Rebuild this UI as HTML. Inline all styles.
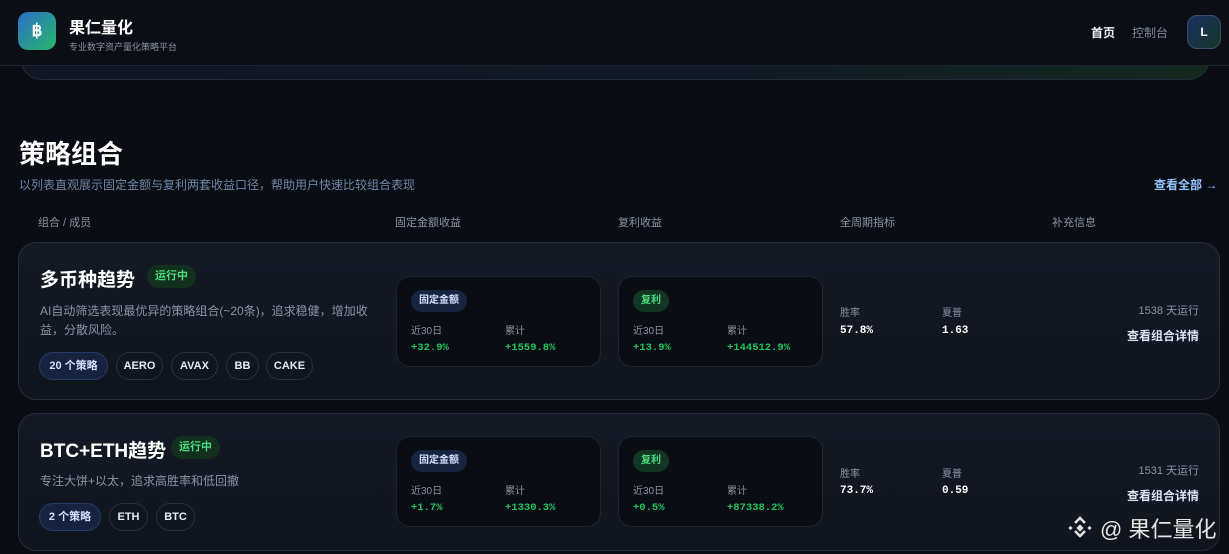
<!DOCTYPE html>
<html><head><meta charset="utf-8"><style>
*{margin:0;padding:0;box-sizing:border-box}
body{width:1229px;height:554px;overflow:hidden;background:#0a0d14;font-family:"Liberation Sans","Noto Sans CJK SC",sans-serif;color:#e8edf5;position:relative}
.a{position:absolute;white-space:nowrap}
.hdr{position:absolute;left:0;top:0;width:1229px;height:66px;background:#0b0e15;border-bottom:1px solid #1e2430}
.logo{left:18px;top:12px;width:38px;height:38px;border-radius:10px;background:linear-gradient(135deg,#2a6fc9,#28b86a);color:#fff;font-weight:bold;font-size:17px;text-align:center;line-height:38px}
.top{left:20px;top:50px;width:1190px;height:30px;border:1px solid #232b3a;border-top:none;border-radius:0 0 22px 22px;background:linear-gradient(90deg,#111622,#111a24 60%,#12291f)}
.card{position:absolute;left:18px;width:1202px;background:linear-gradient(180deg,#141a25,#10141d);border:1px solid #262c38;border-radius:18px}
.badge{position:absolute;height:23px;line-height:23px;padding:0 8px;border-radius:12px;background:#13301f;color:#4ade80;font-size:11px;font-weight:bold}
.chip{position:absolute;height:28px;line-height:26px;border:1px solid #2a303c;border-radius:14px;font-size:11px;font-weight:bold;color:#e6ebf3;text-align:center}
.chip.b{background:#16233f;border-color:#243b66;color:#cfe0ff}
.box{position:absolute;width:205px;height:91px;background:#0a0d13;border:1px solid #1f2530;border-radius:14px}
.pill{position:absolute;left:14px;top:13px;height:22px;line-height:22px;padding:0 8px;border-radius:11px;font-size:10px;font-weight:bold}
.lb{position:absolute;font-size:10px;color:#8b93a3}
.v{position:absolute;font-family:"Liberation Mono",monospace;font-weight:bold;font-size:10.5px;color:#22c55e}
.mv{font-family:"Liberation Mono",monospace;font-weight:bold;font-size:11px;color:#fff}
.desc{font-size:12px;color:#8b93a3;line-height:19px}
.ttl{font-size:19px;font-weight:bold;color:#fff}
.colh{font-size:11px;color:#8a93a3;top:214px}
</style></head><body>
<div class="a top"></div>
<div class="hdr"></div>
<div class="a logo">฿</div>
<div class="a" style="left:69px;top:14px;font-size:16px;font-weight:bold;color:#fff">果仁量化</div>
<div class="a" style="left:69px;top:40px;font-size:9px;color:#8b93a3">专业数字资产量化策略平台</div>
<div class="a" style="left:1091px;top:24px;font-size:12px;font-weight:bold;color:#eef2f7">首页</div>
<div class="a" style="left:1132px;top:24px;font-size:12px;color:#7e8696">控制台</div>
<div class="a" style="left:1187px;top:15px;width:34px;height:34px;border-radius:10px;border:1px solid #3a4a68;background:linear-gradient(135deg,#1a3060,#173626);text-align:center;line-height:32px;font-size:12px;font-weight:bold;color:#fff">L</div>

<div class="a" style="left:19px;top:134px;font-size:26px;font-weight:bold;color:#fff">策略组合</div>
<div class="a" style="left:19px;top:176px;font-size:12px;color:#6f86a8">以列表直观展示固定金额与复利两套收益口径，帮助用户快速比较组合表现</div>
<div class="a" style="left:1154px;top:176px;font-size:12px;font-weight:bold;color:#93c5fd">查看全部 →</div>
<div class="a colh" style="left:38px">组合 / 成员</div>
<div class="a colh" style="left:395px">固定金额收益</div>
<div class="a colh" style="left:618px">复利收益</div>
<div class="a colh" style="left:840px">全周期指标</div>
<div class="a colh" style="left:1052px">补充信息</div>

<!-- card 1 -->
<div class="card" style="top:242px;height:158px"></div>
<div class="a ttl" style="left:40px;top:265px">多币种趋势</div>
<div class="badge" style="left:147px;top:265px">运行中</div>
<div class="a desc" style="left:40px;top:302px;white-space:normal;width:335px">AI自动筛选表现最优异的策略组合(~20条)，追求稳健，增加收益，分散风险。</div>
<div class="chip b" style="left:39px;top:352px;width:69px">20 个策略</div>
<div class="chip" style="left:116px;top:352px;width:47px">AERO</div>
<div class="chip" style="left:171px;top:352px;width:47px">AVAX</div>
<div class="chip" style="left:226px;top:352px;width:33px">BB</div>
<div class="chip" style="left:266px;top:352px;width:47px">CAKE</div>
<div class="box" style="left:396px;top:276px">
 <div class="pill" style="background:#17243d;color:#cfe0ff">固定金额</div>
 <div class="lb" style="left:14px;top:45px">近30日</div><div class="lb" style="left:108px;top:45px">累计</div>
 <div class="v" style="left:14px;top:65px">+32.9%</div><div class="v" style="left:108px;top:65px">+1559.8%</div>
</div>
<div class="box" style="left:618px;top:276px">
 <div class="pill" style="background:#133524;color:#4ade80">复利</div>
 <div class="lb" style="left:14px;top:45px">近30日</div><div class="lb" style="left:108px;top:45px">累计</div>
 <div class="v" style="left:14px;top:65px">+13.9%</div><div class="v" style="left:108px;top:65px">+144512.9%</div>
</div>
<div class="a lb" style="left:840px;top:304px">胜率</div><div class="a lb" style="left:942px;top:304px">夏普</div>
<div class="a mv" style="left:840px;top:325px">57.8%</div><div class="a mv" style="left:942px;top:325px">1.63</div>
<div class="a" style="right:30px;top:302px;font-size:11px;color:#8b93a3">1538 天运行</div>
<div class="a" style="right:30px;top:327px;font-size:12px;font-weight:bold;color:#dbe6f5">查看组合详情</div>

<!-- card 2 -->
<div class="card" style="top:413px;height:138px"></div>
<div class="a ttl" style="left:40px;top:436px">BTC+ETH趋势</div>
<div class="badge" style="left:171px;top:436px">运行中</div>
<div class="a desc" style="left:40px;top:472px">专注大饼+以太，追求高胜率和低回撤</div>
<div class="chip b" style="left:39px;top:503px;width:62px">2 个策略</div>
<div class="chip" style="left:109px;top:503px;width:39px">ETH</div>
<div class="chip" style="left:156px;top:503px;width:39px">BTC</div>
<div class="box" style="left:396px;top:436px">
 <div class="pill" style="background:#17243d;color:#cfe0ff">固定金额</div>
 <div class="lb" style="left:14px;top:45px">近30日</div><div class="lb" style="left:108px;top:45px">累计</div>
 <div class="v" style="left:14px;top:65px">+1.7%</div><div class="v" style="left:108px;top:65px">+1330.3%</div>
</div>
<div class="box" style="left:618px;top:436px">
 <div class="pill" style="background:#133524;color:#4ade80">复利</div>
 <div class="lb" style="left:14px;top:45px">近30日</div><div class="lb" style="left:108px;top:45px">累计</div>
 <div class="v" style="left:14px;top:65px">+0.5%</div><div class="v" style="left:108px;top:65px">+87338.2%</div>
</div>
<div class="a lb" style="left:840px;top:465px">胜率</div><div class="a lb" style="left:942px;top:465px">夏普</div>
<div class="a mv" style="left:840px;top:485px">73.7%</div><div class="a mv" style="left:942px;top:485px">0.59</div>
<div class="a" style="right:30px;top:462px;font-size:11px;color:#8b93a3">1531 天运行</div>
<div class="a" style="right:30px;top:487px;font-size:12px;font-weight:bold;color:#dbe6f5">查看组合详情</div>

<!-- watermark -->
<svg class="a" style="left:1066px;top:515px" width="28" height="26" viewBox="0 0 28 26" fill="none" stroke="#e0e0e0" stroke-width="2.6">
<path d="M9 8l5-5 5 5"/><path d="M9 16l5 5 5-5"/><path d="M14 10l3 3-3 3-3-3z" fill="#e0e0e0" stroke-width="1"/>
<rect x="3" y="11.5" width="3" height="3" fill="#e0e0e0" stroke="none" transform="rotate(45 4.5 13)"/>
<rect x="22" y="11.5" width="3" height="3" fill="#e0e0e0" stroke="none" transform="rotate(45 23.5 13)"/>
</svg>
<div class="a" style="left:1100px;top:512px;font-size:22px;color:#e6e6e6">@ 果仁量化</div>
</body></html>
